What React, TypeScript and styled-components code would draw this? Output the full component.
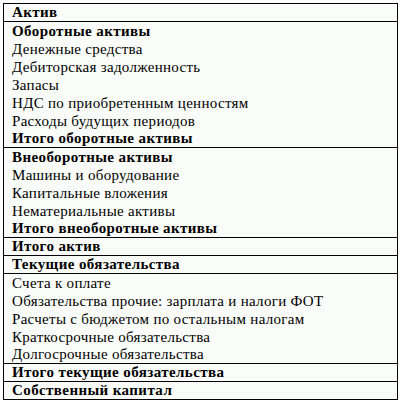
import React from "react";
import styled, { createGlobalStyle } from "styled-components";

const Global = createGlobalStyle`
  html, body { margin: 0; padding: 0; background: #ffffff; }
`;

const Page = styled.div`
  padding: 3px 0 0 3px;
`;

const Table = styled.div`
  width: 393px;
  border: 1px solid #000;
  border-bottom: none;
  background: #fafcf9;
  display: flex;
  flex-direction: column;
  font-family: "Liberation Serif", "Times New Roman", serif;
`;

const Group = styled.div`
  border-bottom: 1px solid #000;
  display: flex;
  flex-direction: column;
`;

const Row = styled.div<{ $bold?: boolean }>`
  height: 18px;
  line-height: 18px;
  padding-left: 8px;
  font-size: 15px;
  color: #000;
  white-space: nowrap;
  font-weight: ${(p) => (p.$bold ? 700 : 400)};
  letter-spacing: ${(p) => (p.$bold ? "0.4px" : "0.3px")};
  &:last-child { height: 17px; line-height: 17px; }
`;

type Item = { t: string; b?: boolean };

const groups: Item[][] = [
  [{ t: "Актив", b: true }],
  [
    { t: "Оборотные активы", b: true },
    { t: "Денежные средства" },
    { t: "Дебиторская задолженность" },
    { t: "Запасы" },
    { t: "НДС по приобретенным ценностям" },
    { t: "Расходы будущих периодов" },
    { t: "Итого оборотные активы", b: true },
  ],
  [
    { t: "Внеоборотные активы", b: true },
    { t: "Машины и оборудование" },
    { t: "Капитальные вложения" },
    { t: "Нематериальные активы" },
    { t: "Итого внеоборотные активы", b: true },
  ],
  [{ t: "Итого актив", b: true }],
  [{ t: "Текущие обязательства", b: true }],
  [
    { t: "Счета к оплате" },
    { t: "Обязательства прочие: зарплата и налоги ФОТ" },
    { t: "Расчеты с бюджетом по остальным налогам" },
    { t: "Краткосрочные обязательства" },
    { t: "Долгосрочные обязательства" },
  ],
  [{ t: "Итого текущие обязательства", b: true }],
  [{ t: "Собственный капитал", b: true }],
];

export default function App() {
  return (
    <Page>
      <Global />
      <Table>
        {groups.map((g, i) => (
          <Group key={i}>
            {g.map((r, j) => (
              <Row key={j} $bold={r.b}>
                {r.t}
              </Row>
            ))}
          </Group>
        ))}
      </Table>
    </Page>
  );
}
